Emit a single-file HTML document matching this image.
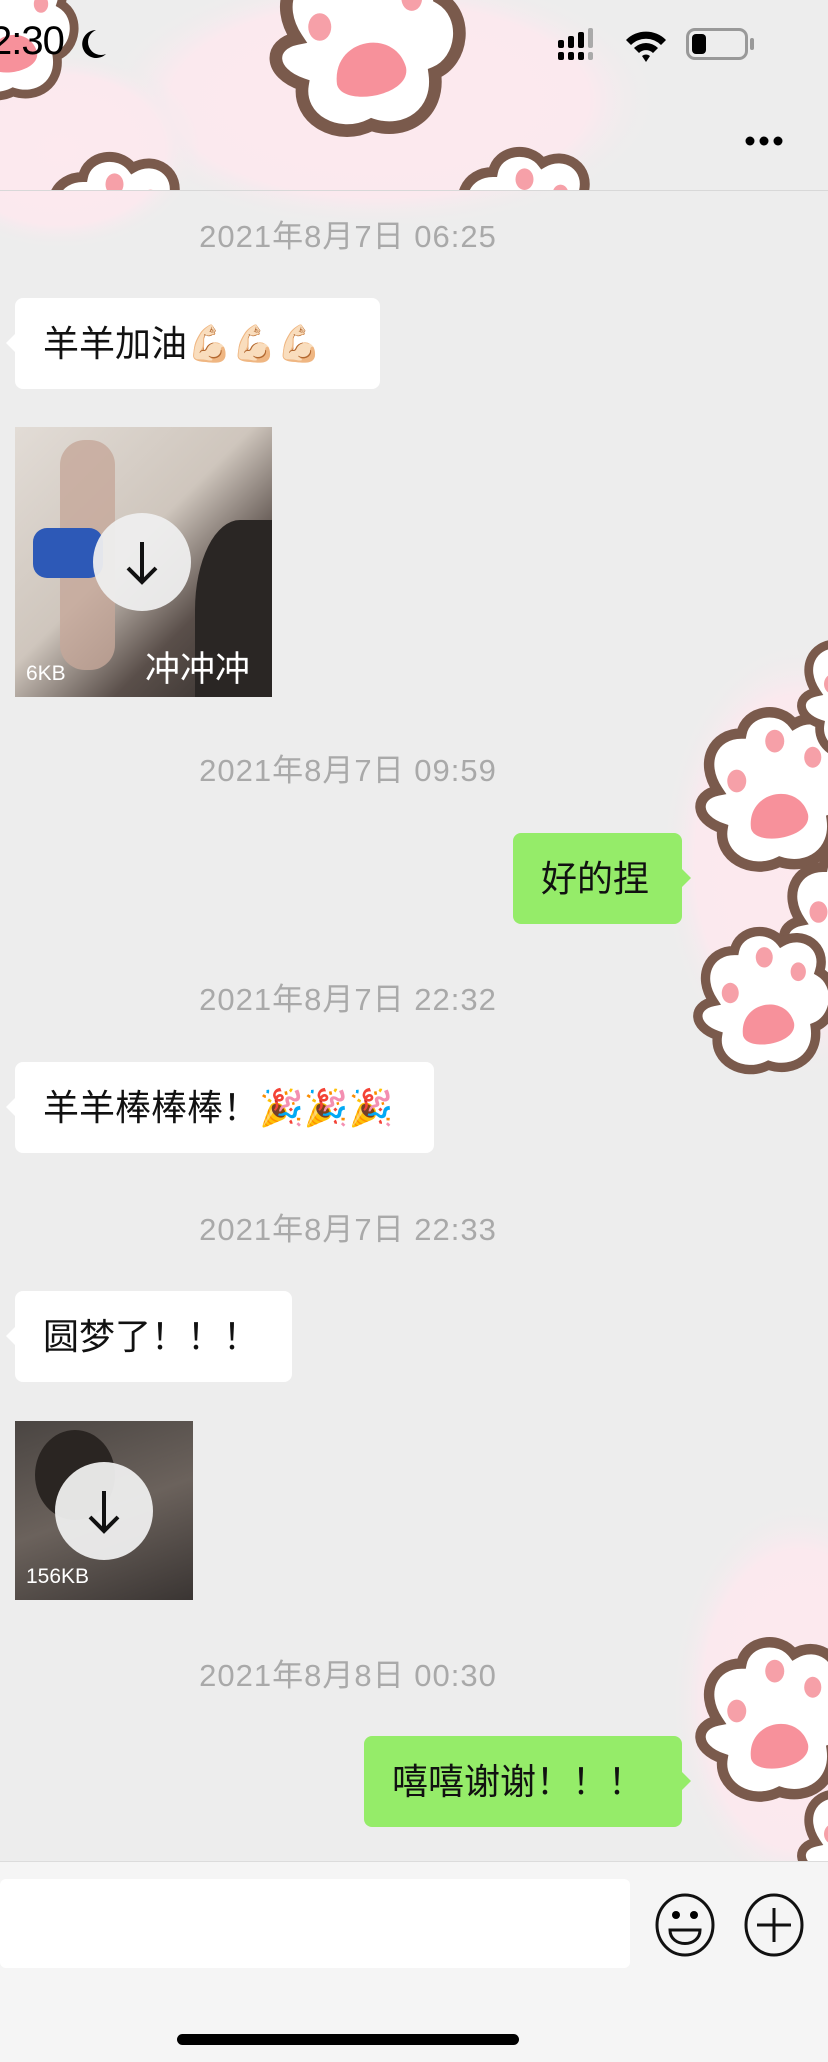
<!DOCTYPE html>
<html><head><meta charset="utf-8">
<style>
*{margin:0;padding:0;box-sizing:border-box}
body{width:828px;height:2062px;background:#ededed;position:relative;overflow:hidden;font-family:"Liberation Sans","Noto Sans CJK SC",sans-serif}
.a{position:absolute}
.ts{position:absolute;left:0;width:696px;text-align:center;color:#a9a9a9;font-size:31px;line-height:36px;letter-spacing:1px}
.b{position:absolute;background:#fff;border-radius:8px;font-size:36px;color:#111;line-height:91px;padding-left:28px;height:91px}
.b.l::before{content:"";position:absolute;left:-9px;top:36px;border:9px solid transparent;border-left:0;border-right-color:#fff}
.b.g{background:#95ec69}
.b.g::after{content:"";position:absolute;right:-9px;top:36px;border:9px solid transparent;border-right:0;border-left-color:#95ec69}
.dl{position:absolute;width:98px;height:98px;border-radius:50%;background:rgba(238,238,238,.95)}
.sz{position:absolute;color:#fff;font-size:21px}
</style></head><body>
<svg class="a" style="left:0;top:0" width="828" height="2062">
<defs>
<radialGradient id="pk" cx="50%" cy="50%" r="50%"><stop offset="0" stop-color="#fde9ee"/><stop offset=".75" stop-color="#fbe9ee"/><stop offset="1" stop-color="#ededed" stop-opacity="0"/></radialGradient>
<g id="paw"><path d="M-55,-10 C-75,-40 -60,-70 -30,-70 C-25,-95 10,-100 25,-80 C50,-95 80,-75 70,-45 C95,-30 90,10 65,20 C70,55 40,75 10,65 C-20,80 -55,60 -50,30 C-80,20 -80,-5 -55,-10Z" fill="#fff" stroke="#7a5a4c" stroke-width="11"/>
<ellipse cx="-35" cy="-20" rx="10" ry="12" fill="#f6a0a8"/><ellipse cx="5" cy="-62" rx="10" ry="12" fill="#f6a0a8"/><ellipse cx="45" cy="-45" rx="9" ry="11" fill="#f6a0a8"/><path d="M-20,30 C-25,-10 30,-20 40,15 C45,40 -15,50 -20,30Z" fill="#f7919b"/></g>
<clipPath id="hc"><rect x="0" y="0" width="828" height="190"/></clipPath>
<clipPath id="rc"><rect x="690" y="0" width="138" height="2062"/></clipPath>
</defs>
<ellipse cx="380" cy="100" rx="280" ry="130" fill="url(#pk)"/>
<ellipse cx="60" cy="150" rx="140" ry="100" fill="url(#pk)"/>
<g clip-path="url(#hc)">
<use href="#paw" transform="translate(360,50) scale(1.15)"/>
<use href="#paw" transform="translate(110,240) scale(.9)"/>
<use href="#paw" transform="translate(520,235) scale(.9)"/>
<use href="#paw" transform="translate(5,40) scale(.8)"/>
</g>
<ellipse cx="800" cy="860" rx="140" ry="220" fill="url(#pk)"/>
<ellipse cx="800" cy="1700" rx="130" ry="200" fill="url(#pk)"/>
<g clip-path="url(#rc)">
<use href="#paw" transform="translate(770,800) scale(.95)"/>
<use href="#paw" transform="translate(850,930) scale(.9)"/>
<use href="#paw" transform="translate(760,1010) scale(.85)"/>
<use href="#paw" transform="translate(860,700) scale(.8)"/>
<use href="#paw" transform="translate(770,1730) scale(.95)"/>
<use href="#paw" transform="translate(860,1850) scale(.8)"/>
</g>
</svg>
<div class="a" style="left:0;top:190px;width:828px;height:1px;background:#d8d8d8"></div>
<div class="a" style="left:-10px;top:19px;font-size:40px;color:#000;letter-spacing:-1px">2:30</div>
<svg class="a" style="left:78px;top:28px" width="30" height="34"><path d="M18,2 A14,14 0 1 0 28,26 A12,12 0 0 1 18,2Z" fill="#000"/></svg>
<svg class="a" style="left:558px;top:28px" width="50" height="36"><g fill="#000"><rect x="0" y="12" width="6" height="8" rx="2"/><rect x="10" y="8" width="6" height="12" rx="2"/><rect x="20" y="4" width="6" height="16" rx="2"/><rect x="0" y="24" width="6" height="8" rx="2"/><rect x="10" y="24" width="6" height="8" rx="2"/><rect x="20" y="24" width="6" height="8" rx="2"/></g><rect x="30" y="0" width="5" height="20" rx="2" fill="#aaa"/><rect x="30" y="24" width="5" height="8" rx="2" fill="#aaa"/></svg>
<svg class="a" style="left:624px;top:26px" width="44" height="36"><path d="M2,14 A28,28 0 0 1 42,14 L37,19 A21,21 0 0 0 7,19Z M10,22 A17,17 0 0 1 34,22 L29,27 A10,10 0 0 0 15,27Z M18,30 L22,36 L26,30 A6,6 0 0 0 18,30Z" fill="#000"/></svg>
<div class="a" style="left:686px;top:28px;width:62px;height:32px;border:3px solid #999;border-radius:9px"></div>
<div class="a" style="left:692px;top:34px;width:14px;height:20px;background:#000;border-radius:4px"></div>
<div class="a" style="left:750px;top:38px;width:4px;height:12px;background:#999;border-radius:2px"></div>
<svg class="a" style="left:744px;top:134px" width="44" height="14"><circle cx="6" cy="7" r="4.5"/><circle cx="20" cy="7" r="4.5"/><circle cx="34" cy="7" r="4.5"/></svg>

<div class="ts" style="top:219px">2021年8月7日 06:25</div>
<div class="b l" style="left:15px;top:298px;width:365px">羊羊加油💪🏻💪🏻💪🏻</div>
<div class="a" style="left:15px;top:427px;width:257px;height:270px;overflow:hidden;background:linear-gradient(135deg,#e2dcd6 0%,#cfc6bd 45%,#5a4f4a 70%,#2e2a28 100%)">
<div class="a" style="left:45px;top:13px;width:55px;height:230px;background:#c6a89a;border-radius:25px;opacity:.8"></div>
<div class="a" style="left:18px;top:101px;width:70px;height:50px;background:#2d59b7;border-radius:14px"></div>
<div class="a" style="left:180px;top:93px;width:90px;height:180px;background:#2a2624;border-radius:50% 0 0 0"></div>
</div>
<div class="dl" style="left:93px;top:513px"></div>
<svg class="a" style="left:122px;top:540px" width="40" height="46"><path d="M20,2 V42 M6,28 L20,42 L34,28" stroke="#111" stroke-width="4" fill="none"/></svg>
<div class="sz" style="left:26px;top:662px">6KB</div>
<div class="a" style="left:145px;top:641px;color:#fff;font-size:35px">冲冲冲</div>

<div class="ts" style="top:753px">2021年8月7日 09:59</div>
<div class="b g" style="left:513px;top:833px;width:169px">好的捏</div>

<div class="ts" style="top:982px">2021年8月7日 22:32</div>
<div class="b l" style="left:15px;top:1062px;width:419px">羊羊棒棒棒！🎉🎉🎉</div>

<div class="ts" style="top:1212px">2021年8月7日 22:33</div>
<div class="b l" style="left:15px;top:1291px;width:277px">圆梦了！！！</div>
<div class="a" style="left:15px;top:1421px;width:178px;height:179px;overflow:hidden;background:linear-gradient(160deg,#4a4542,#6b625c 50%,#3a3533)">
<div class="a" style="left:20px;top:9px;width:80px;height:90px;background:#2a2522;border-radius:50%"></div>
</div>
<div class="dl" style="left:55px;top:1462px"></div>
<svg class="a" style="left:84px;top:1489px" width="40" height="46"><path d="M20,2 V42 M6,28 L20,42 L34,28" stroke="#111" stroke-width="4" fill="none"/></svg>
<div class="sz" style="left:26px;top:1565px">156KB</div>

<div class="ts" style="top:1658px">2021年8月8日 00:30</div>
<div class="b g" style="left:364px;top:1736px;width:318px">嘻嘻谢谢！！！</div>

<div class="a" style="left:0;top:1861px;width:828px;height:201px;background:#f5f5f5;border-top:1px solid #dcdcdc"></div>
<div class="a" style="left:0;top:1879px;width:630px;height:89px;background:#fff;border-radius:6px"></div>
<svg class="a" style="left:650px;top:1890px" width="160" height="70"><g fill="none" stroke="#111" stroke-width="3"><ellipse cx="35" cy="35" rx="28" ry="30"/><path d="M20,40 H50 C50,58 20,58 20,40Z"/><ellipse cx="124" cy="35" rx="28" ry="30"/><path d="M124,18 V52 M107,35 H141"/></g><circle cx="26" cy="25" r="4"/><circle cx="44" cy="25" r="4"/></svg>
<div class="a" style="left:177px;top:2034px;width:342px;height:11px;background:#000;border-radius:6px"></div>
</body></html>
